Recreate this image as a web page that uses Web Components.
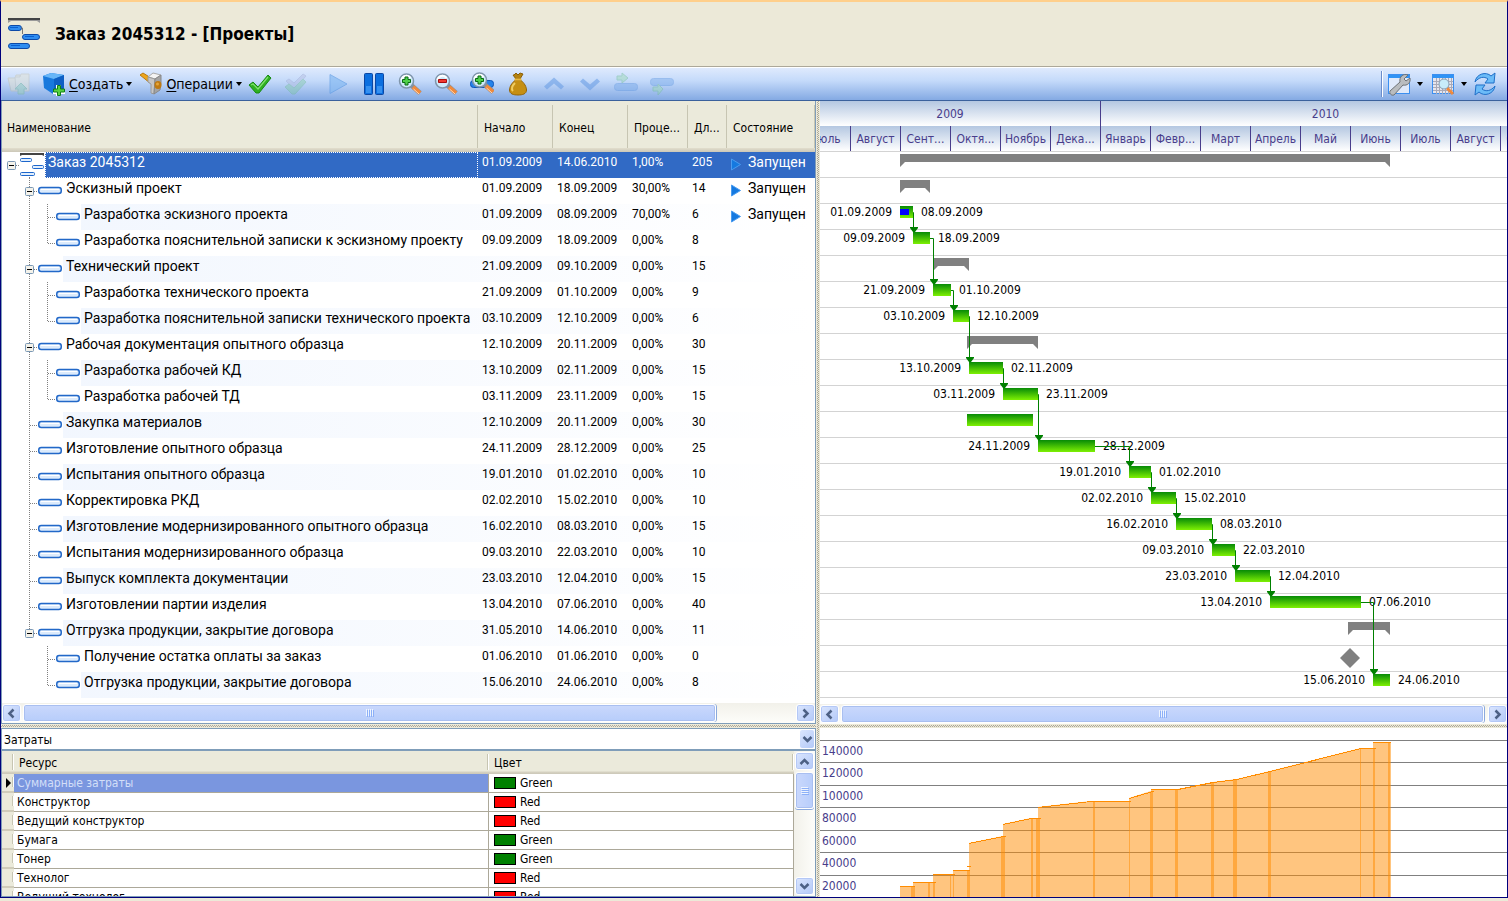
<!DOCTYPE html>
<html lang="ru">
<head>
<meta charset="utf-8">
<title>Заказ 2045312 - [Проекты]</title>
<style>
  html, body { margin: 0; height: 100%; }
  body {
    --ui: "DejaVu Sans Condensed", "Noto Sans", sans-serif;
    --grid: Roboto, "Liberation Sans", Arial, sans-serif;
    --face: #ece9d8;
    --edge: #7f9db9;
    --ink: #483d8b;
    background: #ece9d8;
    font: 12px/16px var(--ui);
    color: #000;
    overflow: hidden;
  }
</style>
</head>
<body>
<project-window></project-window>
<script>
const svg = (w, h, body, attrs = '') =>
  `<svg width="${w}" height="${h}" viewBox="0 0 ${w} ${h}" aria-hidden="true" ${attrs}>${body}</svg>`;

class Base extends HTMLElement {
  connectedCallback() {
    if (this.shadowRoot) return;
    const t = document.createElement('template');
    t.innerHTML = `<style>*{box-sizing:border-box}${this.css()}</style>${this.html()}`;
    this.attachShadow({ mode: 'open' }).append(t.content.cloneNode(true));
  }
  css() { return ''; }
  html() { return '<slot></slot>'; }
}

/* ---------- icons ---------- */
const lens = sign => `
  <path d="M13 13l9 8" stroke="#8a8f98" stroke-width="5"/><path d="M15 15l7 6" stroke="#f08a3c" stroke-width="4"/><path d="M15.500 17l5.500 5" stroke="#ffd9b8" stroke-width="1"/>
  <circle cx="8.500" cy="9" r="7" fill="#cfeafa" stroke="#7f95ab" stroke-width="1.500"/><path d="M3.500 8a5 5 0 0 1 9-2" fill="none" stroke="#fff" stroke-width="2"/>${sign}`;
const plus = '<path d="M7 5h3v2.500h2.500v3H10V13H7v-2.500H4.500v-3H7z" fill="#4fd04a" stroke="#0a6a12"/>';
const ICONS = {
  logo: svg(34, 34, `<path d="M1 1h32v5l-3-2H4L1 6z" fill="#999"/><path d="M1 1h32v2H1z" fill="#444"/>
    <g fill="#2f8df0" stroke="#0d4aa8"><rect x="1.500" y="8.500" width="13" height="5" rx="2.500"/><rect x="15.500" y="17.500" width="17" height="5" rx="2.500"/><rect x="1.500" y="26.500" width="21" height="5" rx="2.500"/></g>
    <path d="M14 11h1.500v6" fill="none" stroke="#777"/><path d="M3 10.500h8M18 19.500h9M4 28.500h9" stroke="#0b5fd0"/>`),
  folder: svg(24, 24, `<g opacity=".45"><path d="M1 6h7l1-3h4v16H4z" fill="#e6e0c8" stroke="#c4c0a8"/><path d="M8 5h5l1-3h8v17H9z" fill="#e9e5d0" stroke="#c8c4b0"/><path d="M14 11l6 6h-3v5h-6v-5H8z" fill="#9ed2b0" stroke="#7ab894"/></g>`),
  cube: svg(24, 24, `<path d="M1 4l8-3 13 2v14l-11 5L2 16z" fill="#1879dd"/><path d="M1 4l8-3 13 2-10 4z" fill="#67b6f8"/><path d="M12 7l10-4v14l-10 5z" fill="#0e5fc4"/><path d="M14 13h5v4h4v5h-4v2h-5v-2h-3v-5h3z" fill="#fff"/><path d="M15.500 13.500h3v3.500h4v3h-4v3.500h-3V20h-4v-3h4z" fill="#55d23e" stroke="#0e7d16"/>`),
  hammer: svg(24, 24, `<path d="M1 3l3-2 8 5-1 5z" fill="#eda51c" stroke="#b97a10"/><path d="M9 5l5-4 8 2-6 4z" fill="#f4f4f4" stroke="#aaa"/><path d="M9 5l7 2-1 15-3-1v-9l-3-2z" fill="#c6c6c6" stroke="#9a9a9a"/><path d="M16 7l6-4v8l-1 7-6 4z" fill="#a4a4a4" stroke="#888"/><ellipse cx="19" cy="13" rx="3.500" ry="4" fill="#bf7a12"/><circle cx="18.500" cy="12" r="1.500" fill="#e6a63c"/>`),
  check: svg(24, 24, `<path d="M1 13l4-3 5 5L20 3l3 3L11 21H8z" fill="#2eb021" stroke="#178a12"/><path d="M3 13l2-1 5 5L20 5" fill="none" stroke="#82e070" stroke-width="1.200"/>`),
  checks: svg(24, 24, `<g opacity=".4"><path d="M2 9l3-2 5 4 9-9 3 2-11 12H9z" fill="#b0b8dc" stroke="#9aa4d0"/><path d="M1 15l4-3 5 4L19 7l3 3-11 12H8z" fill="#7cc8a0" stroke="#6ab890"/></g>`),
  play: svg(24, 24, `<path d="M4 2.500v19L21 12z" fill="#82b8f2" stroke="#5f9ce4" stroke-linejoin="round" opacity=".65"/>`),
  pause: svg(24, 24, `<g fill="#0b6fe0" stroke="#0b47a4"><rect x="2.500" y="1.500" width="8" height="21" rx="1"/><rect x="13.500" y="1.500" width="8" height="21" rx="1"/></g><path d="M4 14h5v7H4zM15 14h5v7h-5z" fill="#3590f0"/>`),
  zoomin: svg(24, 24, lens(plus)),
  zoomout: svg(24, 24, lens('<path d="M4.500 7.500h8v3h-8z" fill="#f03a30" stroke="#a80c0c"/>')),
  zoomfit: svg(24, 24, `<rect x=".5" y="8.500" width="23" height="7" rx="3" fill="#2583ea" stroke="#0e55b8"/><g transform="translate(1 -1)">${lens(plus)}</g>`),
  bag: svg(24, 24, `<path d="M8 3l2-2 2 2 2-2 3 1-3 5H10L7 3z" fill="#b5820f" stroke="#8a5f08"/><path d="M9.500 8h5c4 3 6 7 6 10 0 4-4 5-8.500 5s-8.500-1-8.500-5c0-3 2-7 6-10z" fill="#c58f14" stroke="#946508"/><path d="M9 11c-3 3-4 6-2 8" fill="none" stroke="#f0cc60" stroke-width="2"/><path d="M8.500 7.500h7" stroke="#e8b840" stroke-width="2"/>`),
  up: svg(24, 24, `<path d="M12 5.500l10 9-3 3-7-6-7 6-3-3z" fill="#6a9fe4" opacity=".6"/>`),
  down: svg(24, 24, `<path d="M12 18.500l-10-9 3-3 7 6 7-6 3 3z" fill="#6a9fe4" opacity=".6"/>`),
  indent: svg(24, 24, `<g opacity=".45"><rect x=".5" y="11.500" width="23" height="7" rx="3" fill="#78aaea" stroke="#5f97e0"/><path d="M3 4h5V1l6 5-6 5V8H3z" fill="#9cdab0" stroke="#6fbc94"/></g>`),
  outdent: svg(24, 24, `<g opacity=".45"><rect x=".5" y="6.500" width="23" height="7" rx="3" fill="#78aaea" stroke="#5f97e0"/><path d="M3 15h5v-3l5 5-5 6v-4H3z" fill="#9cdab0" stroke="#6fbc94"/></g>`),
  tools: svg(24, 24, `<rect x="1.500" y="2.500" width="21" height="19" fill="#dfe9fa" stroke="#3b8ff0"/><path d="M2 3h20v3H2z" fill="#2f93f5"/><path d="M3 19L13 10c-1-5 3-9 8-7l-4 4 2 2 4-3c1 5-3 8-7 7L7 23c-3 1-5-2-4-4z" fill="#b9bcbf" stroke="#6e7276"/>`),
  calendar: svg(24, 24, `<rect x="1.500" y="2.500" width="21" height="19" fill="#e6e6ee" stroke="#3b8ff0"/><path d="M2 3h20v3H2z" fill="#2f93f5"/><path d="M2 9.500h20M2 12.500h20M2 15.500h20M2 18.500h20M5.500 6v16M8.500 6v16M11.500 6v16M14.500 6v16M17.500 6v16M20.500 6v16" stroke="#aaaab8"/><path d="M16 16l6 6" stroke="#f08a3c" stroke-width="3"/><circle cx="13" cy="12" r="5" fill="#c8ecfa" stroke="#8aa0b4"/>`),
  refresh: svg(24, 24, `<g fill="#6cbcf8" stroke="#1f6fc8" stroke-linejoin="round"><path d="M2 10C3 2 13-1 18 4l4-3-1 10h-9l3-4C11 4 6 5 2 10z"/><path d="M22 14c-1 8-11 11-16 6l-4 3 1-10h9l-3 4c4 3 9 2 13-3z"/></g>`)
};

customElements.define('ui-icon', class extends Base {
  css() { return ':host{display:block;flex:none}svg{display:block}'; }
  html() { return ICONS[this.getAttribute('name')]; }
});

customElements.define('tool-button', class extends Base {
  css() { return `
    :host{display:block;flex:none}
    button{display:flex;align-items:center;height:32px;padding:0;border:0;background:none;font:14px/18px var(--ui);color:#000;width:36px;justify-content:center}
    :host([menu]) button{width:auto;gap:3px}
    .caret{border:3px solid transparent;border-top:4px solid #000;border-bottom:0}
    ::slotted(u){text-underline-offset:2px}`; }
  html() {
    const menu = this.hasAttribute('menu');
    return `<button type="button" aria-label="${this.getAttribute('label')}"><ui-icon name="${this.getAttribute('icon')}"></ui-icon>
      ${menu ? '<span><slot></slot></span><span class="caret"></span>' : ''}</button>`;
  }
});

customElements.define('app-title', class extends Base {
  css() { return `
    :host{display:flex;align-items:center;gap:14px;height:65px;padding-left:6px;border-bottom:1px solid #aca899;background:var(--face)}
    h1{margin:0;font:bold 17px/22px var(--ui)}`; }
  html() { return `<ui-icon name="logo"></ui-icon><h1><slot></slot></h1>`; }
});

customElements.define('app-toolbar', class extends Base {
  css() { return `
    :host{display:flex;align-items:center;height:34px;padding-right:4px;border-top:1px solid #fff;border-bottom:1px solid #3b619c;
      background:linear-gradient(#dfeafd,#c4dafa 40%,#84aae3)}
    .space{flex:1}
    .sep{width:2px;height:26px;border-left:1px solid #6a8ccb;border-right:1px solid #fff;margin-right:4px}
    .group{display:flex}
    .menus{gap:7px;padding-left:5px}
    .run{padding-left:6px}
    .tail{gap:8px}`; }
  html() {
    const b = (n, l) => `<tool-button icon="${n}" label="${l}"></tool-button>`;
    return `${b('folder', 'Вверх')}
      <div class="group menus"><tool-button menu icon="cube" label="Создать"><u>С</u>оздать</tool-button>
      <tool-button menu icon="hammer" label="Операции"><u>О</u>перации</tool-button></div>
      <div class="group">${b('check', 'Принять')}${b('checks', 'Принять все')}</div>
      <div class="group run">${[['play', 'Запустить'], ['pause', 'Пауза'], ['zoomin', 'Увеличить'], ['zoomout', 'Уменьшить'], ['zoomfit', 'По размеру'], ['bag', 'Затраты'], ['up', 'Выше'], ['down', 'Ниже'], ['indent', 'Вложить'], ['outdent', 'Вынести']].map(x => b(...x)).join('')}</div>
      <div class="space"></div><div class="sep"></div>
      <div class="group tail"><tool-button menu icon="tools" label="Настройка"></tool-button><tool-button menu icon="calendar" label="Календарь"></tool-button></div>
      ${b('refresh', 'Обновить')}`;
  }
});

/* ---------- scroll bar ---------- */
customElements.define('scroll-strip', class extends Base {
  css() { return `
    :host{display:flex;height:20px;gap:2px;padding:1px 0;background:linear-gradient(#f2f1ea,#fdfdfa);flex:none}
    :host([vertical]){flex-direction:column;height:auto;width:21px;padding:1px;background:linear-gradient(90deg,#f2f1ea,#fdfdfa)}
    button{flex:none;width:19px;height:18px;padding:0;border:1px solid #fff;border-radius:3px;background:linear-gradient(135deg,#dbe6fe,#b3c9f8);box-shadow:inset 0 0 0 1px #b4c8f6;display:grid;place-items:center}
    .thumb{border:1px solid #fff;border-radius:3px;background:linear-gradient(#cad8fc,#b7cdfb);box-shadow:inset 0 0 0 1px #a9bff0,1px 0 0 #8ba9dc;display:grid;place-items:center}
    :host([vertical]) .thumb{background:linear-gradient(90deg,#cad8fc,#b7cdfb);box-shadow:inset 0 0 0 1px #a9bff0,0 1px 0 #8ba9dc}
    svg{display:block}`; }
  html() {
    const v = this.hasAttribute('vertical');
    const [a, r] = this.getAttribute('ratio').split('/');
    const chev = d => svg(11, 11, `<path d="${d}" fill="none" stroke="#4d6185" stroke-width="2.500"/>`);
    const grip = v ? svg(8, 8, '<path d="M0 .5h7M0 2.500h7M0 4.500h7M0 6.500h7" stroke="#eef4fe"/><path d="M1 1.500h7M1 3.500h7M1 5.500h7M1 7.500h7" stroke="#8cb0f8"/>')
      : svg(8, 8, '<path d="M.5 0v7M2.500 0v7M4.500 0v7M6.500 0v7" stroke="#eef4fe"/><path d="M1.500 1v7M3.500 1v7M5.500 1v7M7.500 1v7" stroke="#8cb0f8"/>');
    return `<button type="button" aria-label="Назад">${chev(v ? 'M1.500 8l4-4 4 4' : 'M7.500 1.500l-4 4 4 4')}</button>
      <div class="thumb" style="flex:${a}">${grip}</div><div style="flex:${r}"></div>
      <button type="button" aria-label="Вперёд">${chev(v ? 'M1.500 3l4 4 4-4' : 'M3.500 1.500l4 4-4 4')}</button>`;
  }
});

/* ---------- data: level, name, start, end, percent, days, running, bar kind, bar from, bar to ---------- */
const TASKS = [
  [0, 'Заказ 2045312', '01.09.2009', '14.06.2010', '1,00%', 205, 1, 's', 80, 570],
  [1, 'Эскизный проект', '01.09.2009', '18.09.2009', '30,00%', 14, 1, 's', 80, 110],
  [2, 'Разработка эскизного проекта', '01.09.2009', '08.09.2009', '70,00%', 6, 1, 't', 80, 93],
  [2, 'Разработка пояснительной записки к эскизному проекту', '09.09.2009', '18.09.2009', '0,00%', 8, 0, 't', 93, 110],
  [1, 'Технический проект', '21.09.2009', '09.10.2009', '0,00%', 15, 0, 's', 113, 149],
  [2, 'Разработка технического проекта', '21.09.2009', '01.10.2009', '0,00%', 9, 0, 't', 113, 131],
  [2, 'Разработка пояснительной записки технического проекта', '03.10.2009', '12.10.2009', '0,00%', 6, 0, 't', 133, 149],
  [1, 'Рабочая документация опытного образца', '12.10.2009', '20.11.2009', '0,00%', 30, 0, 's', 147, 218],
  [2, 'Разработка рабочей КД', '13.10.2009', '02.11.2009', '0,00%', 15, 0, 't', 149, 183],
  [2, 'Разработка рабочей ТД', '03.11.2009', '23.11.2009', '0,00%', 15, 0, 't', 183, 218],
  [1, 'Закупка материалов', '12.10.2009', '20.11.2009', '0,00%', 30, 0, 'b', 147, 213],
  [1, 'Изготовление опытного образца', '24.11.2009', '28.12.2009', '0,00%', 25, 0, 't', 218, 275],
  [1, 'Испытания опытного образца', '19.01.2010', '01.02.2010', '0,00%', 10, 0, 't', 309, 331],
  [1, 'Корректировка РКД', '02.02.2010', '15.02.2010', '0,00%', 10, 0, 't', 331, 356],
  [1, 'Изготовление модернизированного опытного образца', '16.02.2010', '08.03.2010', '0,00%', 15, 0, 't', 356, 392],
  [1, 'Испытания модернизированного образца', '09.03.2010', '22.03.2010', '0,00%', 10, 0, 't', 392, 415],
  [1, 'Выпуск комплекта документации', '23.03.2010', '12.04.2010', '0,00%', 15, 0, 't', 415, 450],
  [1, 'Изготовлении партии изделия', '13.04.2010', '07.06.2010', '0,00%', 40, 0, 't', 450, 541],
  [1, 'Отгрузка продукции, закрытие договора', '31.05.2010', '14.06.2010', '0,00%', 11, 0, 's', 528, 570],
  [2, 'Получение остатка оплаты за заказ', '01.06.2010', '01.06.2010', '0,00%', 0, 0, 'm', 520, 540],
  [2, 'Отгрузка продукции, закрытие договора', '15.06.2010', '24.06.2010', '0,00%', 8, 0, 't', 553, 570]
];
const LINKS = [[2, 3], [3, 5], [5, 6], [6, 8], [8, 9], [9, 11], [11, 12], [12, 13], [13, 14], [14, 15], [15, 16], [16, 17], [17, 20]];

/* ---------- task tree ---------- */
const pill = x => `<rect x="${x}.75" y="9.500" width="22.500" height="6" rx="2.500" fill="#dcebfc" stroke="#2268c8" stroke-width="1.500"/><path d="M${x + 3} 11.500h18" stroke="#fff"/>`;
const knob = x => `<rect x="${x - 4}.5" y="9.500" width="8" height="8" rx="1" fill="#f4f2ea" stroke="#7b98b5"/><path d="M${x - 2} 13.500h5" stroke="#000"/>`;
const dots = d => `<path d="${d}" fill="none" stroke="#808080" stroke-dasharray="1 1"/>`;
function branch(i) {
  const [lvl] = TASKS[i];
  const parent = i + 1 < TASKS.length && TASKS[i + 1][0] > lvl;
  const moreAt = l => { for (let k = i + 1; k < TASKS.length; k++) { if (TASKS[k][0] === l) return true; if (TASKS[k][0] < l) return false; } return false; };
  let s = '';
  if (lvl === 0) {
    s = dots('M14 13.500h4M27.500 25v1') + `<path d="M18 1h24v3l-2-1H20l-2 1z" fill="#444"/><g fill="#e2effd" stroke="#1c66cc"><rect x="18.500" y="6.500" width="11" height="3" rx="1"/><rect x="30.500" y="13.500" width="11" height="3" rx="1"/><rect x="18.500" y="20.500" width="14" height="3" rx="1"/></g>` + knob(9);
    return svg(43, 26, s);
  }
  if (lvl === 1) s += dots(`M27.500 0v${moreAt(1) ? 26 : 13}M28 13.500h8`) + pill(36) + (parent ? knob(27) : '');
  if (lvl === 2) s += (moreAt(1) ? dots('M27.500 0v26') : '') + dots(`M45.500 0v${moreAt(2) ? 26 : 13}M46 13.500h8`) + pill(54);
  return svg(lvl === 1 ? 61 : 79, 26, s);
}

customElements.define('task-table', class extends Base {
  css() { return `
    :host{display:flex;flex-direction:column;background:#fff;border:1px solid var(--edge);border-top:0;min-width:0;overflow:hidden}
    table{border-collapse:collapse;table-layout:fixed;width:100%}
    col.d{width:75px}col.p{width:60px}col.l{width:39px}col.s{width:88px}
    th{height:51px;padding:2px 0 0 5px;text-align:left;font-weight:normal;white-space:nowrap;overflow:hidden;position:relative;
      background:linear-gradient(#ebeadb 47px,#e2decd 47px,#d6d2c2 49px,#cbc7b8)}
    th + th{padding-left:6px}
    th::after{content:"";position:absolute;right:-1px;top:4px;height:43px;width:2px;background:linear-gradient(90deg,#c7c5b2 50%,#fff 50%)}
    td{height:26px;padding:0 0 6px 4px;font:14px/20px var(--grid);white-space:nowrap;overflow:hidden}
    td.n{padding:0}
    td.n div{display:flex;height:26px}
    td.n svg{flex:none;background:#fff}
    td.n span{flex:1;padding-left:3px;overflow:hidden}
    td.num{font-size:12px}
    tbody tr:nth-child(odd){background:linear-gradient(90deg,#f1f6fe,#fff)}
    tbody tr.sel{background:#316ac5;color:#fff}
    .sel td.n span{outline:1px dotted #fff;outline-offset:-1px}
    td.st div{display:flex;gap:7px;height:20px}
    td.st svg{flex:none;margin-top:6px}
    .fill{flex:1;min-height:4px}`; }
  html() {
    const rows = TASKS.map((t, i) => `<tr${i ? '' : ' class="sel"'}><td class="n"><div>${branch(i)}<span>${t[1]}</span></div></td>
      <td class="num">${t[2]}</td><td class="num">${t[3]}</td><td class="num">${t[4]}</td><td class="num">${t[5]}</td>
      <td class="st">${t[6] ? `<div>${svg(10, 13, '<path d="M.5 1v11l9-5.500z" fill="#1579e0" stroke="#4a9cf0"/>')}<span>Запущен</span></div>` : ''}</td></tr>`).join('');
    return `<table><colgroup><col><col class="d"><col class="d"><col class="p"><col class="l"><col class="s"></colgroup>
      <thead><tr><th>Наименование</th><th>Начало</th><th>Конец</th><th>Проце...</th><th>Дл...</th><th>Состояние</th></tr></thead>
      <tbody>${rows}</tbody></table><div class="fill"></div><scroll-strip ratio="694/76"></scroll-strip>`;
  }
});

/* ---------- gantt ---------- */
customElements.define('gantt-chart', class extends Base {
  css() { return `
    :host{display:flex;flex-direction:column;background:#fff;min-width:0;overflow:hidden}
    .years,.months{display:flex;width:750px;margin-left:-20px;height:25px;color:var(--ink);text-align:center;line-height:26px;flex:none}
    .years>span,.months>span{flex:none;background:linear-gradient(#b4c7e1,#fff);white-space:nowrap}
    .months>span{width:50px;border-left:1px solid var(--ink)}
    .months>span:first-child{border-color:transparent}
    .years>span{width:300px}.years>span+span{width:450px;border-left:1px solid var(--ink)}
    .body{position:relative;border-bottom:1px solid #d3d3d3;flex:none}
    .row{display:flex;height:26px;padding-top:2px;border-top:1px solid #d3d3d3;white-space:nowrap;line-height:13px}
    .from{text-align:right;padding-right:8px;flex:none}
    .to{padding-left:8px}
    .t,.b{height:12px;background:linear-gradient(#078a07,#7ef003);flex:none}
    .done{height:6px;width:9px;margin-top:3px;background:#00f}
    .s{height:13px;background:#808080;flex:none;clip-path:polygon(0 0,100% 0,100% 100%,calc(100% - 5px) 8px,5px 8px,0 100%)}
    .m{width:20px;height:20px;background:#808080;clip-path:polygon(50% 0,100% 50%,50% 100%,0 50%)}
    .links{position:absolute;left:0;top:0}
    .fill{flex:1;min-height:6px}`; }
  html() {
    const months = ['Июль', 'Август', 'Сент...', 'Октя...', 'Ноябрь', 'Дека...', 'Январь', 'Февр...', 'Март', 'Апрель', 'Май', 'Июнь', 'Июль', 'Август', 'Сент...'];
    const rows = TASKS.map((t, i) => { const lab = t[7] === 't';
      return `<div class="row"><div class="from" style="width:${t[8]}px">${lab ? t[2] : ''}</div><div class="${t[7]}" style="width:${t[9] - t[8]}px">${i === 2 ? '<div class="done"></div>' : ''}</div>${lab ? `<div class="to">${t[3]}</div>` : ''}</div>`; }).join('');
    const links = LINKS.map(([a, b]) => { const x = TASKS[b][8], y = b * 26 + 3;
      return `<path d="M${TASKS[a][9]} ${a * 26 + 9}.5H${x}.5V${y - 4}" fill="none" stroke="#008000"/><path d="M${x - 3} ${y - 5}h8v1l-3 4h-2l-3-4z" fill="#008000"/>`; }).join('');
    return `<div class="years"><span>2009</span><span>2010</span></div><div class="months">${months.map(m => `<span>${m}</span>`).join('')}</div>
      <div class="body">${rows}${svg(687, 546, links, 'class="links"')}</div><div class="fill"></div><scroll-strip ratio="100/0"></scroll-strip>`;
  }
});

/* ---------- resource list ---------- */
customElements.define('resource-list', class extends Base {
  css() { return `
    :host{display:flex;flex-direction:column;background:#fff;border:1px solid var(--edge);min-width:0;min-height:0;overflow:hidden}
    .combo{display:flex;height:22px;border-bottom:2px solid var(--edge);padding:1px;flex:none}
    select{flex:1;appearance:none;border:0;background:none;font:12px/16px var(--ui);padding:2px 0 0 1px;margin:0;color:#000}
    .arrow{width:14px;border-radius:2px;background:linear-gradient(135deg,#dbe6fe,#b3c9f8);display:grid;place-items:center;flex:none}
    .pane{display:flex;flex:1;min-height:0}
    .list{flex:1;overflow:hidden;min-width:0}
    table{border-collapse:separate;border-spacing:0;table-layout:fixed;width:100%}
    col.m{width:12px}col.c{width:305px}
    th{height:23px;text-align:left;font-weight:normal;padding:0 0 0 5px;position:relative;background:linear-gradient(#ebeadb 20px,#d6d2c2 21px,#cbc7b8)}
    th::after,td.m::after{content:"";position:absolute;right:0;top:3px;bottom:4px;width:2px;background:linear-gradient(90deg,#c7c5b2 50%,#fff 50%)}
    td{height:19px;padding:0 0 0 3px;line-height:16px;border-bottom:1px solid #aca899;border-right:1px solid #aca899;white-space:nowrap}
    td.m{position:relative;background:#ebeadb;border-right:0;padding:0;border-bottom:2px solid #d0ccba}
    td.m svg{display:block;margin:auto}
    .sel td.r{background:#7a96df;color:#d3dff8}
    td.c div{display:flex;align-items:center;gap:4px;padding-left:2px}
    i{width:22px;height:12px;border:1px solid #000}`; }
  html() {
    const rows = [['Суммарные затраты', 1], ['Конструктор', 0], ['Ведущий конструктор', 0], ['Бумага', 1], ['Тонер', 1], ['Технолог', 0], ['Ведущий технолог', 0]]
      .map(([n, g], i) => `<tr${i ? '' : ' class="sel"'}><td class="m">${i ? '' : svg(5, 10, '<path d="M0 0l5 5-5 5z"/>')}</td><td class="r">${n}</td><td class="c"><div><i style="background:${g ? 'green' : 'red'}"></i>${g ? 'Green' : 'Red'}</div></td></tr>`).join('');
    return `<div class="combo"><select aria-label="Показатель"><option>Затраты</option></select><span class="arrow">${svg(11, 11, '<path d="M1.500 3l4 4 4-4" fill="none" stroke="#4d6185" stroke-width="2.500"/>')}</span></div>
      <div class="pane"><div class="list"><table><colgroup><col class="m"><col><col class="c"></colgroup><thead><tr><th></th><th>Ресурс</th><th>Цвет</th></tr></thead><tbody>${rows}</tbody></table></div>
      <scroll-strip vertical ratio="36/65"></scroll-strip></div>`;
  }
});

/* ---------- cost chart ---------- */
customElements.define('cost-chart', class extends Base {
  css() { return `
    :host{display:grid;position:relative;grid-template-rows:12px 22px 23px 22px 23px 22px 23px 1fr;background:#fff;color:var(--ink);min-width:0;min-height:0;overflow:hidden}
    span{border-top:1px solid #808080;padding:2px 0 0 2px;overflow:hidden}
    svg{position:absolute;left:0;top:0}`; }
  html() {
    const tops = ['80 158H95', '93 154H116', '113 146H135', '133 142H150', '147 138H151', '149 115L183 108H186', '183 96L211 90H221', '218 79L271 73H311', '309 70L333 63H334', '331 61H358L393 54L417 51L450 43L541 20H556', '553 14H571'];
    const strips = [[91, 4, 158], [108, 2, 154], [113, 2, 154], [130, 1, 146], [133, 1, 146], [147, 3, 142], [181, 4, 109], [211, 2, 90], [216, 4, 90], [273, 2, 73], [309, 1, 73], [330, 3, 64], [355, 3, 61], [391, 3, 55], [413, 4, 52], [448, 3, 44], [540, 1, 20], [553, 2, 20], [568, 2, 14]];
    return ['', '140000', '120000', '100000', '80000', '60000', '40000', '20000'].map((l, i) => i ? `<span>${l}</span>` : '<div></div>').join('') +
      svg(687, 240, `<path d="M80 240V158H93V154H113V146H133V142H149V115L183 108V96L211 90H218V79L271 73H309V70L331 63V61H358L393 54L417 51L450 43L541 20H553V14H571V240z" fill="#ff8c00" fill-opacity=".5"/>
        ${strips.map(([x, w, y]) => `<rect x="${x}" y="${y}" width="${w}" height="${240 - y}" fill="#ff8c00" fill-opacity=".5"/>`).join('')}
        <g transform="translate(0 .5)" shape-rendering="crispEdges">${tops.map(d => `<path d="M${d}" fill="none" stroke="#ff8c00"/>`).join('')}</g>`);
  }
});

customElements.define('split-bar', class extends Base {
  css() { return `:host{display:block;background:conic-gradient(#aca899 25%,#ece9d8 0 50%,#aca899 0 75%,#ece9d8 0) 0 0/2px 2px content-box,var(--face);padding:0 1px}
    :host([across]){padding:1px 0}`; }
  html() { return ''; }
});

customElements.define('project-window', class extends Base {
  css() { return `
    :host{display:flex;flex-direction:column;height:100vh;background:var(--face)}
    header{border-top:2px solid #ffcf8b;border-left:1px solid #00007b;border-right:1px solid #00007b;flex:none}
    main{display:grid;flex:1;min-height:0;margin-bottom:3px;border:solid #00007b;border-width:0 1px 1px;
      grid-template-columns:minmax(0,815fr) 4px minmax(0,687fr);grid-template-rows:auto 4px minmax(0,1fr)}
    .v{grid-row:1/4;grid-column:2}
    .left{grid-column:1;grid-row:2}.right{grid-column:3;grid-row:2}
    task-table{grid-area:1/1}gantt-chart{grid-area:1/3}resource-list{grid-area:3/1}cost-chart{grid-area:3/3}`; }
  html() {
    return `<header><app-title>Заказ 2045312 - [Проекты]</app-title><app-toolbar></app-toolbar></header>
      <main><task-table></task-table><gantt-chart></gantt-chart><split-bar class="v"></split-bar><split-bar across class="left"></split-bar><split-bar across class="right"></split-bar><resource-list></resource-list><cost-chart></cost-chart></main>`;
  }
});
</script>
</body>
</html>
